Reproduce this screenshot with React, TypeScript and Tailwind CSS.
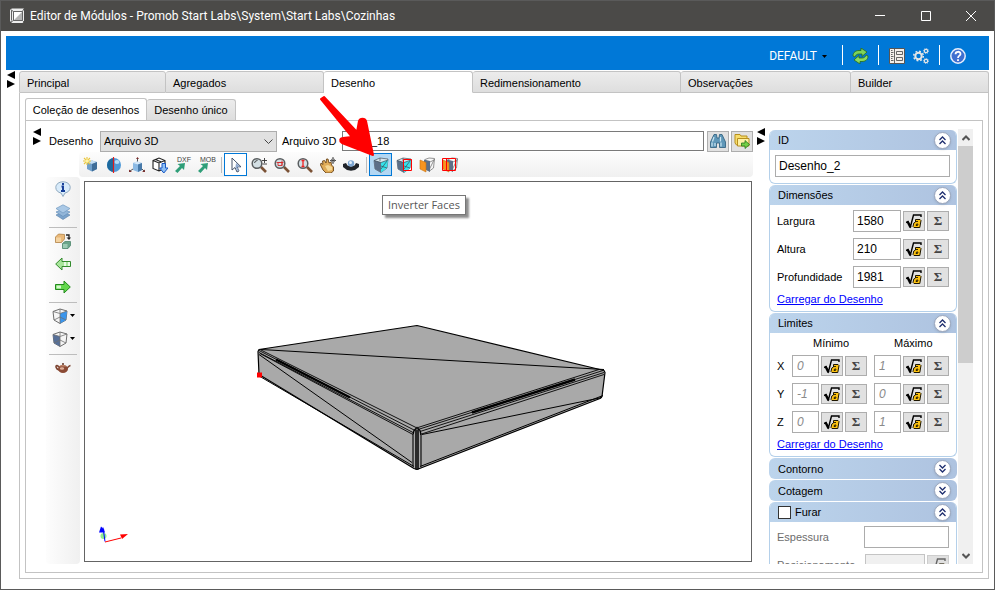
import React, { useState } from 'react';
import clsx from 'clsx';

const mainTabs = [
  { name: 'Principal', width: 'w-[147px]' },
  { name: 'Agregados', width: 'w-[158px]' },
  { name: 'Desenho', width: 'w-[149px]' },
  { name: 'Redimensionamento', width: 'w-[208px]' },
  { name: 'Observações', width: 'w-[170px]' },
  { name: 'Builder', width: 'flex-1' },
];

const dimensions = [
  { label: 'Largura', value: '1580' },
  { label: 'Altura', value: '210' },
  { label: 'Profundidade', value: '1981' },
];

const limits = [
  { axis: 'X', min: '0', max: '1' },
  { axis: 'Y', min: '-1', max: '0' },
  { axis: 'Z', min: '0', max: '1' },
];

function Icon({ children, size = 16 }: { children: React.ReactNode; size?: number }) {
  return (
    <svg width={size} height={size} viewBox="0 0 16 16" className="shrink-0" aria-hidden="true">
      {children}
    </svg>
  );
}

/* ---------- Toolbar icons ---------- */

const NewCubeIcon = () => (
  <Icon>
    <path d="M4 5l5-1.500 5 1.500v7l-5 2.500L4 12z" fill="#6f9fcb" />
    <path d="M4 5l5-1.500L14 5 9 7z" fill="#c5def3" />
    <path d="M9 7l5-2v7l-5 2.500z" fill="#3f6d98" />
    <path d="M4 0v8M0 4h8M1 1l6 6M7 1L1 7" stroke="#e9c53a" strokeWidth="1.100" />
    <circle cx="4" cy="4" r="1.800" fill="#fff3a5" />
  </Icon>
);

const SphereIcon = () => (
  <Icon>
    <circle cx="8" cy="8" r="7" fill="#4f9ad8" />
    <path d="M8 1a7 7 0 0 0 0 14z" fill="#1d6a9e" />
    <ellipse cx="11" cy="5" rx="2.500" ry="2" fill="#b5dcf7" />
    <path d="M7.500 0v16" stroke="#e01b1b" strokeWidth="1.200" />
  </Icon>
);

const AxesCubeIcon = () => (
  <Icon>
    <path d="M8.500 5V1M4 12l-3 2M13 12l2 2" stroke="#555" />
    <path d="M7 2l1.500-2L10 2zM0 15v-2.500L3 15zM16 15v-2.500L13 15z" fill="#7a2f2f" />
    <path d="M4 6l4-1.500L13 6v7l-4 2-5-2z" fill="#8cbae4" />
    <path d="M4 6l4-1.500L13 6 9 7.500z" fill="#d6e9f9" />
    <path d="M9 7.500L13 6v7l-4 2z" fill="#4779a8" />
  </Icon>
);

const CubeDownIcon = () => (
  <Icon>
    <path d="M1 3.500L7 1l6 2.500v8L7 14l-6-2.500zM1 3.500L7 6l6-2.500M7 6v8M3.500 2.500l6 2.500" fill="#fff" stroke="#222" strokeWidth="1.100" />
    <path d="M10 6.500h3.500V11H16l-4.200 5-4.200-5H10z" fill="#8fc0f5" stroke="#1657c4" strokeWidth="1" />
  </Icon>
);

function ExportIcon({ text }: { text: string }) {
  return (
    <svg width="20" height="20" viewBox="0 0 20 20" className="shrink-0" aria-hidden="true">
      <text x="4" y="7" fontSize="7" fontFamily="Liberation Sans, sans-serif" fill="#444">{text}</text>
      <path d="M2 16l5-5-2.500-2 7.500-1-1 7-2-2-4.500 5z" fill="#2f9e78" />
    </svg>
  );
}

const CursorIcon = () => (
  <Icon>
    <path d="M4 1v12l3-2.500L9 15l2-1-2-4.200h4z" fill="#fff" stroke="#44536b" />
    <path d="M8 6l4 3.500-3 .5 2 3.500-1.500.5L7.500 10z" fill="#8fa9cf" />
  </Icon>
);

function ZoomIcon({ kind }: { kind: 'plus' | 'window' | 'height' }) {
  return (
    <Icon>
      <path d="M10 10l5 5" stroke="#7b5236" strokeWidth="2.600" />
      <circle cx="6" cy="6.500" r="4.800" fill="#d4e0e5" stroke="#5a5e60" strokeWidth="1.500" />
      {kind === 'plus' && <path d="M3.500 6a3 3 0 0 1 3-2.500M13.500 1v5M11 3.500h5M11.500 7H16" stroke="#333" strokeWidth=".9" fill="none" />}
      {kind === 'window' && <path d="M4 5.500h4v3H4zM2.500 5.500h7M8 3.500v5" stroke="#d52b2b" strokeWidth=".9" fill="none" />}
      {kind === 'height' && <path d="M6 3v7M4.500 3.500h3M4.500 9.500h3" stroke="#e22" strokeWidth="1.300" />}
    </Icon>
  );
}

const HandIcon = () => (
  <Icon>
    <path d="M13 0v7M10 3.500h6" stroke="#444" />
    <circle cx="13" cy="3.500" r="1.800" fill="none" stroke="#777" />
    <path d="M1 6l2 1.500L2.500 4l2-.5L6 6l.5-4H8l1 4 2-1 .5 3 2 2v4l-2.500 2H6l-3-3L.5 8z" fill="#e0ac58" stroke="#6b4519" strokeWidth=".9" />
    <path d="M5 9l3-1 4 2v3l-4 1z" fill="#f5d794" />
  </Icon>
);

const OrbitIcon = () => (
  <Icon>
    <path d="M0 7l3-1 1.500 2.500L8 9.500l3.500-1L13 6l3 1v3l-4 3-4 .8L4 13 0 10z" fill="#20242a" />
    <circle cx="8" cy="6.500" r="3.200" fill="#7ea7d3" />
    <circle cx="7.500" cy="5.500" r="1.500" fill="#e2effb" />
  </Icon>
);

function InvertIcon({ red = false }: { red?: boolean }) {
  return (
    <Icon>
      <path d="M1 3.500L7 1l8 1-1 9-6 4.500L2 12z" fill="#d7e5ee" stroke="#5b6670" strokeWidth=".8" />
      <path d="M1 3.500L8 5.500v10L2 12z" fill="#5d6f88" />
      <path d="M8 5.500L15 3l-1 8-6 4.500z" fill="#35e3ec" />
      <path d="M1 3.500l7 2L15 3M7 1v3M8 12l6-8M8 9l6 2" stroke="#3c4a57" fill="none" strokeWidth=".7" />
      {red && <path d="M7.500 2.500h8v11h-8z" fill="none" stroke="#f00" />}
    </Icon>
  );
}

function SplitFaceIcon({ red = false }: { red?: boolean }) {
  return (
    <Icon>
      <path d="M6 2.500L10 1l5.500.5L14.500 11l-4 3M11 5l4-2M10.500 12l2-4 3-6" fill="none" stroke="#777" strokeWidth=".8" />
      <path d="M5 2.500l6 1.500v11l-6-3z" fill="#5d6f88" />
      <path d="M1 3l6 2.500V15l-6-3z" fill="#f79420" stroke="#c67414" strokeWidth=".6" />
      {red && <path d="M.5 1.500h13v12H.5zM4.500 1.500v12" fill="none" stroke="#f00" />}
    </Icon>
  );
}

/* ---------- Side bar icons ---------- */

const InfoIcon = () => (
  <Icon>
    <path d="M8 .8c4 0 7.200 2.400 7.200 5.700 0 3-2.500 5-5.200 5.500L8 15.500 6 12C3.300 11.500.8 9.500.8 6.500.8 3.200 4 .8 8 .8z" fill="#d8ebfa" stroke="#8fa9bf" />
    <path d="M8 2v2M6.500 5.500H8V10M6 10h4" stroke="#123b96" strokeWidth="1.900" fill="none" />
  </Icon>
);

const LayersIcon = () => (
  <Icon>
    <path d="M1 11l7 4.500 7-4.500-7-3z" fill="#7ba3cc" stroke="#6288af" strokeWidth=".7" />
    <path d="M1 8l7 4.500L15 8 8 5z" fill="#93b6d9" stroke="#6790ba" strokeWidth=".7" />
    <path d="M1 4.500L8 9l7-4.500L8 .8z" fill="#a9c8e6" stroke="#7199c0" strokeWidth=".7" />
  </Icon>
);

const ReplaceIcon = () => (
  <Icon>
    <path d="M.5 4l3-3 6 .5V6l-3 3.500h-6z" fill="#e9b878" stroke="#a97838" strokeWidth=".7" />
    <path d="M1 4.500h5v4.500H1z" fill="#f4d3a1" />
    <path d="M7.500 10.500l2.500-2h5.500v4l-2.500 3H7.500z" fill="#6aa58a" stroke="#3f7b5f" strokeWidth=".7" />
    <path d="M8 11h4.500v4H8z" fill="#9ccbb4" />
    <path d="M11 2h3v3" stroke="#222" strokeWidth="1.300" fill="none" />
    <path d="M11.500 4.500H16L14 7z" fill="#222" />
  </Icon>
);

function GreenArrowIcon({ left = false }: { left?: boolean }) {
  return (
    <Icon>
      {left ? (
        <>
          <path d="M7 2v3.500h8.500v5H7V14L.7 8z" fill="#a8e69b" stroke="#338a2d" />
          <path d="M9 6h2v4H9zM13 6h2v4h-2z" fill="#e8f9e4" />
        </>
      ) : (
        <>
          <path d="M9 2v3.500H.5v5H9V14l6.300-6z" fill="#63d84d" stroke="#238a1d" />
          <path d="M1.500 6.500H6v3H1.500z" fill="#d6f6cf" />
        </>
      )}
    </Icon>
  );
}

function ViewCubeIcon({ dark = false }: { dark?: boolean }) {
  return (
    <Icon>
      <path d="M1 3.500L8 1l7 2-1 9-6 3.500L2 12z" fill="#f5f5f5" stroke="#6e6e6e" />
      {dark ? (
        <path d="M1 3.500l7 2v10L2 12z" fill="#566f98" />
      ) : (
        <path d="M8 5.500L15 3l-1 9-6 3.500z" fill="#3a95ec" />
      )}
      <path d="M1 3.500l7 2L15 3M8 5.500v10M8 1v4M2 12l6-3 6 3" fill="none" stroke="#6e6e6e" strokeWidth=".8" />
    </Icon>
  );
}

const TeapotIcon = () => (
  <Icon>
    <path d="M11 9c2-1 2-3 4.500-3.500M4 10C1 9 0 5.500 2 5.500L4.500 7" fill="none" stroke="#7b4330" strokeWidth="1.500" />
    <ellipse cx="8" cy="9" rx="5" ry="4" fill="#8b4a34" />
    <path d="M4 6.500c2-2 6-2 8 0z" fill="#c08468" />
    <circle cx="8" cy="4" r="1" fill="#5e2f20" />
    <ellipse cx="7" cy="8.500" rx="2.200" ry="1.200" fill="#e0b09a" />
  </Icon>
);

/* ---------- Small shared parts ---------- */

function Splitter() {
  return (
    <button aria-label="Recolher painel" className="flex w-2 shrink-0 flex-col items-center self-start">
      <svg width="8" height="17" viewBox="0 0 8 17" aria-hidden="true">
        <path d="M8 0v8L0 4zM0 9v8l8-4z" fill="#000" />
      </svg>
    </button>
  );
}

function ToolButton({ label, active = false, hot = false, children }: { label: string; active?: boolean; hot?: boolean; children: React.ReactNode }) {
  return (
    <button
      aria-label={label}
      className={clsx(
        'flex h-[23px] w-[23px] shrink-0 items-center justify-center',
        active && 'border border-[#0078d7] bg-white',
        hot && 'border border-[#0078d7] bg-[#b3d7f3]',
      )}
    >
      {children}
    </button>
  );
}

const Separator = () => <div className="ml-1 mr-0.5 h-4 w-px bg-[#bdbdbd]" />;
const SideSeparator = () => <div className="mt-1 mb-px h-px w-7 bg-[#bdbdbd]" />;

function FormulaButton({ disabled = false }: { disabled?: boolean }) {
  return (
    <button
      aria-label="Fórmula"
      disabled={disabled}
      className={clsx('flex h-5 w-[22px] shrink-0 items-center justify-center border border-[#adadad]', disabled ? 'bg-[#cccccc] opacity-60' : 'bg-[#e1e1e1]')}
    >
      <Icon>
        <path d="M0 9.500l2-1 2.500 5L7.500 2H15v2" fill="none" stroke="#000" strokeWidth="1.400" />
        <path d="M1.500 8.500l3 6" stroke="#000" strokeWidth="2.200" />
        <path d="M9.500 6.500H14l1 1-1.200 7H8l-1-1 .8-3.500 1.700-1z" fill="#fdc20f" stroke="#1c1500" />
        <path d="M9.500 8.500h2.500M10 12.500l.5-1.500h1.500l-.5 1.500z" fill="none" stroke="#1c1500" strokeWidth=".9" />
      </Icon>
    </button>
  );
}

const SumButton = () => (
  <button aria-label="Somatório" className="flex h-5 w-[22px] shrink-0 items-center justify-center border border-[#adadad] bg-[#e1e1e1] font-['Liberation_Serif',serif] text-[13px] font-bold text-[#444]">
    Σ
  </button>
);

interface PanelProps {
  title: string;
  open?: boolean;
  checkbox?: boolean;
  children?: React.ReactNode;
}

function Panel({ title, open = false, checkbox = false, children }: PanelProps) {
  const [expanded, setExpanded] = useState(open);
  return (
    <section className={clsx('shrink-0 overflow-hidden rounded-[6px]', expanded && 'border border-t-0 border-[#b4d0ea]')}>
      <div className={clsx('flex items-center bg-gradient-to-r from-[#bcd4ec] to-[#aec3e0]', expanded ? 'h-5 pr-[7px] pl-2' : 'h-[21px] pr-2 pl-[9px]')}>
        {checkbox ? (
          <label className="flex items-center gap-1">
            <input type="checkbox" className="h-[13px] w-[13px] appearance-none border border-[#333] bg-white" />
            {title}
          </label>
        ) : (
          <h2>{title}</h2>
        )}
        <button
          aria-label={title}
          onClick={() => setExpanded(!expanded)}
          className="-mr-0.5 ml-auto flex h-[17px] w-[17px] items-center justify-center rounded-full border border-[#9aa6bd] bg-white shadow-sm"
        >
          <svg width="9" height="9" viewBox="0 0 9 9" fill="none" stroke="#1f2f6f" strokeWidth="1.300" aria-hidden="true">
            {expanded ? <path d="M1.500 4l3-3 3 3M1.500 8l3-3 3 3" /> : <path d="M1.500 1l3 3 3-3M1.500 5l3 3 3-3" />}
          </svg>
        </button>
      </div>
      {expanded && children}
    </section>
  );
}

function LimitField({ label, value }: { label: string; value: string }) {
  return (
    <div className="flex items-center gap-0.5">
      <input
        aria-label={label}
        defaultValue={value}
        className="h-[22px] w-[27px] border border-[#acacac] px-1 text-xs italic text-[#8a8a8a]"
      />
      <FormulaButton />
      <SumButton />
    </div>
  );
}

/* ---------- Header ---------- */

function TitleBar() {
  return (
    <header className="flex h-[30px] shrink-0 items-center bg-[#4b4a48] pl-2 text-white">
      <Icon>
        <path d="M1 1.500L3 .5h12v13L13.500 15H3l-2-2z" fill="#eee" />
        <path d="M5 4h8v8H5z" fill="#fff" />
        <path d="M13 4v8H5z" fill="#b5b5b5" />
        <path d="M4.500 3.500h9v9h-9zM2.500 2.500v10M1.500 1.500l3 2M15 .5l-1.500 3M2 14l2.500-1.500M13.500 12.500L15 14" fill="none" stroke="#555" strokeWidth=".9" />
      </Icon>
      <h1 className="ml-[5px] font-[Roboto,sans-serif] text-xs whitespace-nowrap">
        Editor de Módulos - Promob Start Labs\System\Start Labs\Cozinhas
      </h1>
      <div className="ml-auto flex h-full">
        <button aria-label="Minimizar" className="flex w-[46px] items-center justify-center">
          <svg width="10" height="10" viewBox="0 0 10 10" stroke="#fff"><path d="M0 4.500h10" /></svg>
        </button>
        <button aria-label="Maximizar" className="flex w-[45px] items-center justify-center">
          <svg width="10" height="10" viewBox="0 0 10 10" stroke="#fff" fill="none"><path d="M.5.5h9v9h-9z" /></svg>
        </button>
        <button aria-label="Fechar" className="flex w-[46px] items-center justify-center">
          <svg width="10" height="10" viewBox="0 0 10 10" stroke="#fff"><path d="M0 0l10 10M10 0L0 10" /></svg>
        </button>
      </div>
    </header>
  );
}

function BlueBar() {
  return (
    <div className="flex h-[34px] shrink-0 items-center justify-end bg-[#0078d7] pt-1.5 pr-[23px] text-white">
      <button className="mr-[15px] flex items-center gap-[5px] font-[Roboto,sans-serif] text-xs">
        DEFAULT
        <svg width="5" height="3" viewBox="0 0 5 3" aria-hidden="true"><path d="M0 0h5L2.500 3z" fill="#000" /></svg>
      </button>
      <div className="mb-0.5 h-5 w-px bg-white" />
      <button aria-label="Atualizar" className="mx-[9px]">
        <svg width="17" height="16" viewBox="0 0 17 16">
          <path d="M1 8c0-4 3-5.500 6-5.500h2V0l6 4-5 4.500V6H7C5 6 3.500 7 3 9z" fill="#7ed35a" stroke="#266b1b" strokeWidth=".8" />
          <path d="M16 8c0 4-3 5.500-6 5.500H8V16l-6-4 5-4.500V10h3c2 0 3.500-1 4-3z" fill="#8ada5f" stroke="#266b1b" strokeWidth=".8" />
        </svg>
      </button>
      <div className="mb-0.5 h-5 w-px bg-white" />
      <button aria-label="Propriedades" className="ml-2.5">
        <Icon>
          <path d="M.5.5h15v15H.5z" fill="#f3efea" stroke="#555" />
          <path d="M5.500 1v14M7.500 3.500h6v3h-6zM7.500 9.500h6v3h-6zM2 2.500h1.500M2 4.500h2.500M2 6.500h1.500M2 8.500h2.500M2 10.500h1.500M2 12.500h2.500" fill="none" stroke="#555" strokeWidth=".9" />
        </Icon>
      </button>
      <button aria-label="Configurações" className="mx-2">
        <Icon>
          <circle cx="5.500" cy="8" r="3.200" fill="none" stroke="#e6e6e6" strokeWidth="2" />
          <circle cx="5.500" cy="8" r="4.800" fill="none" stroke="#e6e6e6" strokeWidth="1.500" strokeDasharray="1.900 1.870" />
          <circle cx="13" cy="3" r="1.700" fill="none" stroke="#e6e6e6" strokeWidth="1.200" />
          <circle cx="13" cy="3" r="2.600" fill="none" stroke="#e6e6e6" strokeWidth=".8" strokeDasharray="1 1.040" />
          <circle cx="13" cy="13" r="1.700" fill="none" stroke="#e6e6e6" strokeWidth="1.200" />
          <circle cx="13" cy="13" r="2.600" fill="none" stroke="#e6e6e6" strokeWidth=".8" strokeDasharray="1 1.040" />
        </Icon>
      </button>
      <div className="mb-0.5 ml-0.5 h-5 w-px bg-white" />
      <button aria-label="Ajuda" className="ml-2.5">
        <Icon>
          <circle cx="8" cy="8" r="7.200" fill="#3f6fd0" stroke="#e7eefc" strokeWidth="1.500" />
          <path d="M5.500 6.200C5.500 3 10.500 3 10.500 6c0 1.700-2.500 1.700-2.500 4M8 11.200v1.800" fill="none" stroke="#fff" strokeWidth="1.800" />
        </Icon>
      </button>
    </div>
  );
}

/* ---------- Drawing area ---------- */

function SlabDrawing() {
  return (
    <svg viewBox="85 182 666 378" className="h-full w-full" role="img" aria-label="Modelo 3D">
      <path d="M417 325L259 349l-1 2 1 23 155 94 3 1 183-71 2-2 3-24-1-2z" fill="#a9a9a9" stroke="#000" strokeWidth="1.200" strokeLinejoin="round" />
      <g fill="none" stroke="#000">
        <path d="M261 349l343 20" />
        {/* left rounded edge */}
        <path d="M260 349l156 78M259 350l156 80M259 352l154 80M260 353l153 81" strokeWidth=".9" />
        <path d="M276 359l74 38" strokeWidth="2.400" />
        {/* right rounded edge */}
        <path d="M418 427l181-58M418 429l185-59M420 431l184-59M420 434l184-60" strokeWidth=".9" />
        <path d="M472 412l103-33" strokeWidth="2.400" />
        <path d="M259 354l153 108M260 376l154 90" />
        <path d="M422 434l180-37M420 466l183-71" />
        <path d="M413 434v32M421 434v32" strokeWidth="1.100" />
        <path d="M416 429v40M418 429v40" strokeWidth="1.500" />
        <path d="M413 434l1-4 3-3 3 3 1 4" strokeWidth="1.300" />
      </g>
      <path d="M257 372h5v5h-5z" fill="#f00" />
      <circle cx="103.500" cy="535.500" r="3" fill="#90ee90" />
      <path d="M105 541l-2-14" stroke="#00f" />
      <path d="M99 532l2-6 3 3 1 3z" fill="#00f" />
      <path d="M105 541.500l16-4" stroke="#f00" />
      <path d="M120 534l8-.5-6 5z" fill="#f00" />
    </svg>
  );
}

function DrawingToolbar() {
  return (
    <div className="ml-[38px] flex h-[25px] shrink-0 items-center rounded bg-gradient-to-b from-[#fdfdfd] to-[#f0f0f0]">
      <ToolButton label="Novo"><NewCubeIcon /></ToolButton>
      <ToolButton label="Esfera"><SphereIcon /></ToolButton>
      <ToolButton label="Eixos"><AxesCubeIcon /></ToolButton>
      <ToolButton label="Importar"><CubeDownIcon /></ToolButton>
      <ToolButton label="Exportar DXF"><ExportIcon text="DXF" /></ToolButton>
      <ToolButton label="Exportar MOB"><ExportIcon text="MOB" /></ToolButton>
      <Separator />
      <ToolButton label="Selecionar" active><CursorIcon /></ToolButton>
      <ToolButton label="Zoom"><ZoomIcon kind="plus" /></ToolButton>
      <ToolButton label="Zoom janela"><ZoomIcon kind="window" /></ToolButton>
      <ToolButton label="Zoom total"><ZoomIcon kind="height" /></ToolButton>
      <ToolButton label="Mover"><HandIcon /></ToolButton>
      <ToolButton label="Orbitar"><OrbitIcon /></ToolButton>
      <Separator />
      <ToolButton label="Inverter Faces" hot><InvertIcon /></ToolButton>
      <ToolButton label="Inverter todas"><InvertIcon red /></ToolButton>
      <ToolButton label="Separar face"><SplitFaceIcon /></ToolButton>
      <ToolButton label="Separar todas"><SplitFaceIcon red /></ToolButton>
    </div>
  );
}

const Caret = () => (
  <svg width="5" height="3" viewBox="0 0 5 3" className="shrink-0" aria-hidden="true"><path d="M0 0h5L2.500 3z" fill="#000" /></svg>
);

function SideToolbar() {
  return (
    <div className="flex w-[34px] shrink-0 flex-col items-center rounded bg-gradient-to-r from-[#fdfdfd] to-[#f0f0f0]">
      <ToolButton label="Informações"><InfoIcon /></ToolButton>
      <ToolButton label="Camadas"><LayersIcon /></ToolButton>
      <SideSeparator />
      <ToolButton label="Substituir"><ReplaceIcon /></ToolButton>
      <ToolButton label="Anterior"><GreenArrowIcon left /></ToolButton>
      <ToolButton label="Próximo"><GreenArrowIcon /></ToolButton>
      <SideSeparator />
      <button aria-label="Vista" className="flex h-[23px] items-center gap-0.5"><ViewCubeIcon /><Caret /></button>
      <button aria-label="Exibição" className="flex h-[23px] items-center gap-0.5"><ViewCubeIcon dark /><Caret /></button>
      <SideSeparator />
      <ToolButton label="Renderizar"><TeapotIcon /></ToolButton>
    </div>
  );
}

function FileRow() {
  return (
    <div className="flex h-[22px] shrink-0 items-center pl-2">
      <label htmlFor="desenho" className="w-[51px] shrink-0">Desenho</label>
      <div className="relative w-[177px] shrink-0">
        <select id="desenho" className="block h-[21px] w-full appearance-none border border-[#adadad] bg-[#e1e1e1] px-[3px]">
          <option>Arquivo 3D</option>
        </select>
        <svg width="9" height="5" viewBox="0 0 9 5" className="pointer-events-none absolute top-2 right-1" fill="none" stroke="#444" aria-hidden="true"><path d="M.5.5l4 4 4-4" /></svg>
      </div>
      <label htmlFor="arquivo" className="w-[65px] shrink-0 pl-[5px] whitespace-nowrap">Arquivo 3D</label>
      <input id="arquivo" defaultValue="_18" className="h-5 min-w-0 flex-1 border border-[#7a7a7a] pl-7" />
      <button aria-label="Procurar" className="ml-[3px] flex h-[21px] w-[22px] items-center justify-center border border-[#adadad] bg-[#e1e1e1]">
        <Icon>
          <path d="M4 1.500h2.500L7 5h2l.5-3.500H12L15.500 9v5.500H9.500V10h-3v4.500H.5V9z" fill="#5f97b8" stroke="#2a5c7b" strokeWidth=".8" />
          <path d="M4 4L2.500 8.500M10.500 4v4.500M2 9.500v4M11 9.500v4M5 10v3" stroke="#cbe6f2" strokeWidth="1.200" />
        </Icon>
      </button>
      <button aria-label="Abrir" className="ml-0.5 flex h-[21px] w-[22px] items-center justify-center border border-[#adadad] bg-[#e1e1e1]">
        <Icon>
          <path d="M1 1.500h5L7 3h6v9H2.500L1 10z" fill="#f6dc6b" stroke="#b78f1d" />
          <path d="M3.500 5.500H15V13H3.500z" fill="#fdf0a4" stroke="#b78f1d" />
          <path d="M7.500 10H11V7.500l4.500 4L11 15.500V13H7.500z" fill="#74cf45" stroke="#25741a" strokeWidth=".8" />
        </Icon>
      </button>
    </div>
  );
}

/* ---------- Properties ---------- */

function Properties() {
  return (
    <div className="flex h-full w-[188px] shrink-0 flex-col gap-px overflow-hidden pt-px">
      <Panel title="ID" open>
        <div className="px-[5px] pt-[5px] pb-[6px]">
          <input aria-label="ID" defaultValue="Desenho_2" className="block h-[22px] w-[175px] border border-[#acacac] px-[3px] text-xs" />
        </div>
      </Panel>
      <Panel title="Dimensões" open>
        <div className="flex flex-col gap-1.5 px-[7px] pt-[5px]">
          {dimensions.map((d) => (
            <div key={d.label} className="flex items-center gap-0.5">
              <label htmlFor={d.label} className="flex-1">{d.label}</label>
              <input id={d.label} defaultValue={d.value} className="h-[22px] w-12 border border-[#acacac] px-[3px] text-xs" />
              <FormulaButton />
              <SumButton />
            </div>
          ))}
        </div>
        <a href="#dimensoes" className="mt-[3px] mb-1 ml-[7px] block text-[#0000ff] underline">Carregar do Desenho</a>
      </Panel>
      <Panel title="Limites" open>
        <div className="flex flex-col gap-1.5 px-[7px]">
          <div className="-mb-1 flex h-5 items-center">
            <span className="ml-9 w-[81px]">Mínimo</span>
            <span>Máximo</span>
          </div>
          {limits.map((l) => (
            <div key={l.axis} className="flex items-center justify-between">
              <span className="w-2">{l.axis}</span>
              <LimitField label={`${l.axis} mínimo`} value={l.min} />
              <LimitField label={`${l.axis} máximo`} value={l.max} />
            </div>
          ))}
        </div>
        <a href="#limites" className="mt-[3px] mb-1 ml-[7px] block text-[#0000ff] underline">Carregar do Desenho</a>
      </Panel>
      <Panel title="Contorno" />
      <Panel title="Cotagem" />
      <Panel title="Furar" open checkbox>
        <div className="flex flex-col gap-1.5 px-[7px] pt-1 text-[#6d6d6d]">
          <div className="flex items-center justify-between">
            <label htmlFor="espessura">Espessura</label>
            <input id="espessura" className="h-[22px] w-[85px] border border-[#acacac]" />
          </div>
          <div className="flex items-center gap-0.5">
            <label htmlFor="posicionamento" className="flex-1">Posicionamento</label>
            <input id="posicionamento" disabled className="h-[22px] w-[60px] border border-[#c4c4c4] bg-[#f0f0f0]" />
            <FormulaButton disabled />
          </div>
        </div>
      </Panel>
    </div>
  );
}

function ScrollBar() {
  return (
    <div className="ml-px flex w-[15px] shrink-0 flex-col bg-[#f0f0f0]">
      <button aria-label="Rolar para cima" className="flex h-[17px] items-center justify-center">
        <svg width="8" height="6" viewBox="0 0 8 6" fill="none" stroke="#555" strokeWidth="2"><path d="M.5 5L4 1.500 7.500 5" /></svg>
      </button>
      <div className="min-h-0 flex-1">
        <div className="h-[54%] bg-[#cdcdcd]" />
      </div>
      <button aria-label="Rolar para baixo" className="flex h-[17px] items-center justify-center">
        <svg width="8" height="6" viewBox="0 0 8 6" fill="none" stroke="#555" strokeWidth="2"><path d="M.5 1L4 4.500 7.500 1" /></svg>
      </button>
    </div>
  );
}

export default function App() {
  const [tab, setTab] = useState('Desenho');

  return (
    <div className="relative h-screen bg-white pr-[11px] pb-[7px] font-['Liberation_Sans',Arial,sans-serif] text-[11px] leading-4 text-black">
      <div className="flex h-full flex-col border border-[#5a5a5a]">
        <TitleBar />
        <main className="flex min-h-0 flex-1 flex-col px-[5px] pt-[5px] pb-[10px]">
          <BlueBar />
          <div className="flex min-h-0 flex-1 gap-1 pt-px pl-px">
            <Splitter />
            <div className="flex min-h-0 min-w-0 flex-1 flex-col">
              {/* Main tabs */}
              <nav className="flex h-[22px] shrink-0">
                {mainTabs.map((t) => (
                  <button
                    key={t.name}
                    onClick={() => setTab(t.name)}
                    className={clsx(
                      'rounded-t-[3px] border border-l-0 border-[#c3c3c3] px-[7px] pt-0.5 text-left first:border-l',
                      t.width,
                      tab === t.name ? 'border-b-white bg-white' : 'bg-gradient-to-b from-[#ececec] to-[#dedede]',
                    )}
                  >
                    {t.name}
                  </button>
                ))}
              </nav>
              <div className="flex min-h-0 flex-1 flex-col border border-t-0 border-[#c3c3c3] px-[5px] pt-[5px] pb-[5px]">
                <nav className="flex h-[22px] shrink-0 items-end">
                  <button className="-mb-px h-[23px] w-[122px] rounded-t-[3px] border border-b-0 border-[#c3c3c3] bg-white whitespace-nowrap">Coleção de desenhos</button>
                  <button className="h-[21px] w-[89px] rounded-t-[3px] border border-b-0 border-l-0 border-[#c3c3c3] bg-gradient-to-b from-[#ececec] to-[#dedede] whitespace-nowrap">Desenho único</button>
                </nav>
                <div className="flex min-h-0 flex-1 border border-[#c3c3c3] pt-[7px] pr-[9px] pb-[8px] pl-[7px]">
                  <Splitter />
                  <div className="flex min-w-0 flex-1 flex-col pt-0.5">
                    <FileRow />
                    <DrawingToolbar />
                    <div className="flex min-h-0 flex-1 pl-[5px]">
                      <SideToolbar />
                      <div className="relative mt-1 mr-px mb-0.5 ml-1 min-w-0 flex-1 border border-[#646464]">
                        <SlabDrawing />
                        <div role="tooltip" className="absolute top-[13px] left-[297px] flex h-5 items-center border border-[#767676] bg-white px-[5px] font-['Open_Sans',sans-serif] text-[11px] whitespace-nowrap text-[#575757] shadow-[3px_3px_2px_rgba(0,0,0,0.45)]">
                          Inverter Faces
                        </div>
                      </div>
                    </div>
                  </div>
                  <div className="mx-1"><Splitter /></div>
                  <div className="flex min-h-0 shrink-0 pt-px">
                    <Properties />
                    <ScrollBar />
                  </div>
                </div>
              </div>
            </div>
          </div>
        </main>
      </div>

      {/* Red pointer over the highlighted tool */}
      <svg width="64" height="66" viewBox="316 92 64 66" className="pointer-events-none absolute top-[92px] left-[316px]" aria-hidden="true">
        <path
          d="M321 99l3-2 33 35 2-11c1-3 6-3 7 0l7 34-31-12c-3-2-2-5 1-5l9-1z"
          fill="#f00"
          stroke="#f00"
          strokeWidth="2"
          strokeLinejoin="round"
        />
      </svg>
    </div>
  );
}
